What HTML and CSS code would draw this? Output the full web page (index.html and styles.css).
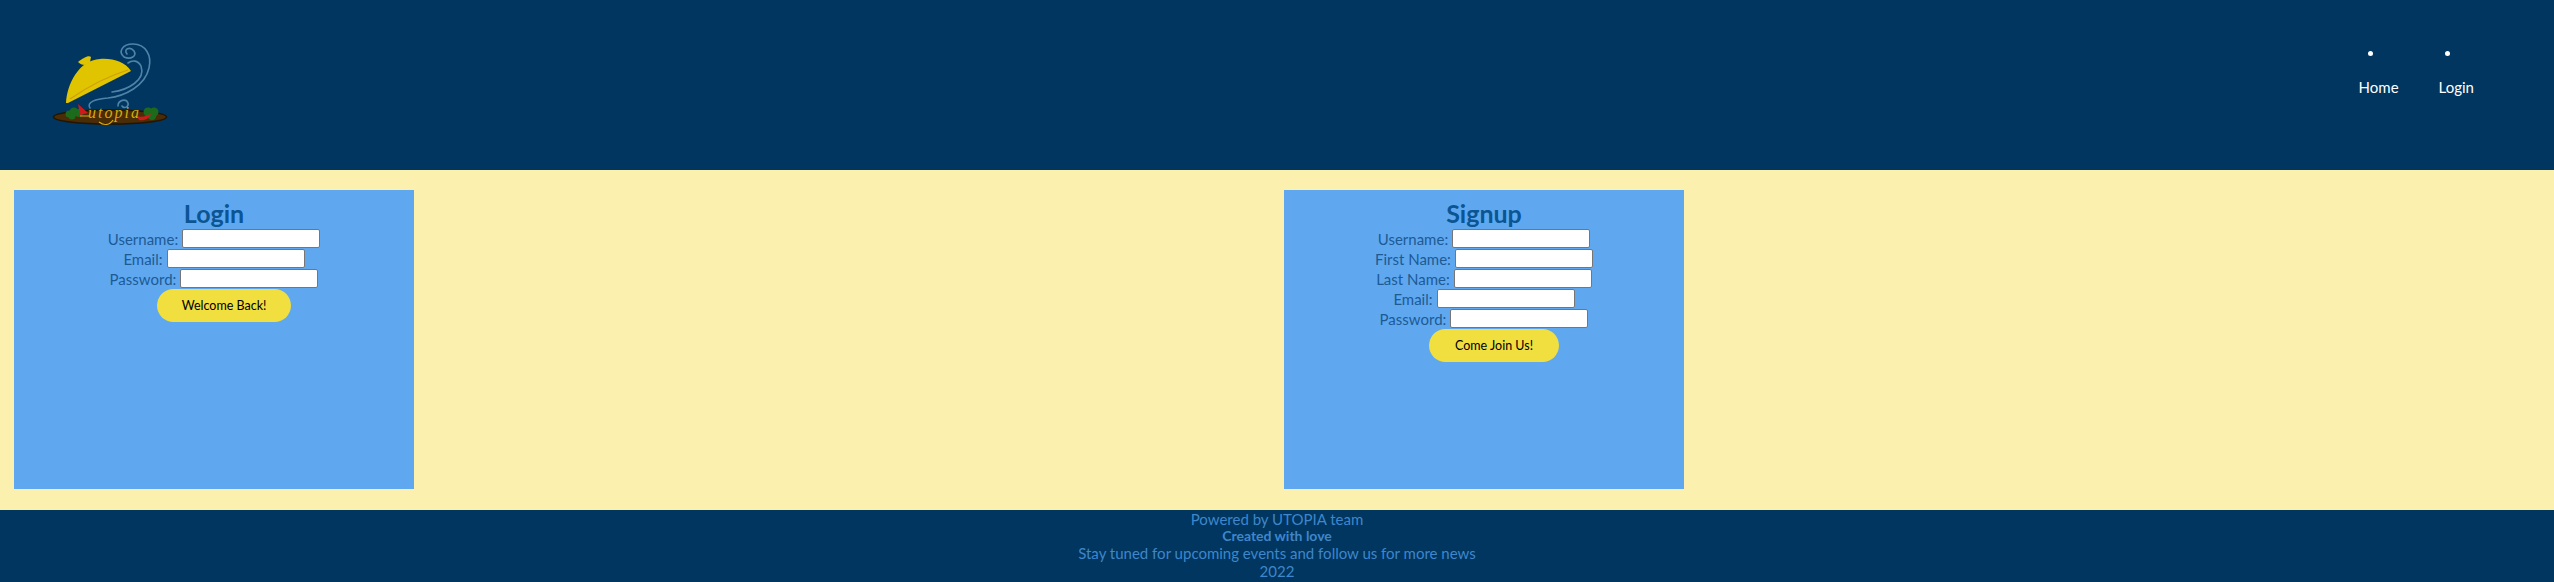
FILE: index.html
```html
<!DOCTYPE html>
<html lang="en">
<head>
  <meta charset="UTF-8" />
  <title>Utopia</title>
  <link rel="stylesheet" href="styles.css">
</head>
<body>
  <header class="site-header">
    <svg class="logo" width="140" height="105" viewBox="40 30 140 105" role="img" aria-label="Utopia logo">
      <!-- steam -->
      <g fill="none" stroke="#4f84a8" stroke-width="1.6" stroke-linecap="round">
        <path d="M112 92 C128 90 146 80 141 66 C138 60 132 60 128 63" />
        <path d="M127 54 C123 49 130 46 134 51 C137 56 131 60 124 57 C118 52 122 44 133 44 C146 44 152 56 149 68 C145 86 125 96 108 98 C96 99 86 102 90 108" />
        <path d="M118 106 C118 100 126 98 128 103 C129 107 124 109 122 106" />
      </g>
      <!-- plate -->
      <ellipse cx="110" cy="117" rx="56.5" ry="7" fill="#4a2c06" stroke="#241500" stroke-width="1.5" />
      <!-- lid -->
      <path d="M78 62 C80 60 82 59 84 58 C87 56 90 56 91 57 L90 62 L85 65 C82 65 80 64 78 62 Z" fill="#e0c400" />
      <path d="M66 103 C67 84 79 60 100 59 C113 58 125 62 131 71 L68 103 Z" fill="#e0c400" />
      <path d="M70 99 C86 88 108 76 128 70" fill="none" stroke="#cf9f08" stroke-width="1.2" />
      <!-- vegetables -->
      <g fill="#1c6b1c">
        <circle cx="69" cy="114" r="3.5" />
        <circle cx="74" cy="112" r="4.5" />
        <circle cx="79" cy="113" r="4" />
        <circle cx="72" cy="116" r="3.5" />
        <circle cx="148" cy="112" r="4.5" />
        <circle cx="154" cy="112" r="4.5" />
        <circle cx="152" cy="116" r="4" />
      </g>
      <path d="M78 104 L88 113 L80 115 Z" fill="#cc1b1b" />
      <path d="M137 116 C141 118 148 116 151 113 C150 119 144 121 139 120 Z" fill="#cc1b1b" />
      <text class="logo-text" x="88" y="118">utopia</text>
      <path d="M80 116 L90 116 M99 122 C104 126 110 125 113 120" fill="none" stroke="#d9a90f" stroke-width="1.2" />
    </svg>
    <ul class="nav">
      <li><a href="#">Home</a></li>
      <li><a href="#">Login</a></li>
    </ul>
  </header>

  <main class="forms">
    <section class="card">
      <h2>Login</h2>
      <form>
        <div class="row"><label>Username:</label> <input type="text" /></div>
        <div class="row"><label>Email:</label> <input type="text" /></div>
        <div class="row"><label>Password:</label> <input type="password" /></div>
        <button type="button" class="btn btn-login">Welcome Back!</button>
      </form>
    </section>
    <section class="card">
      <h2>Signup</h2>
      <form>
        <div class="row"><label>Username:</label> <input type="text" /></div>
        <div class="row"><label>First Name:</label> <input type="text" /></div>
        <div class="row"><label>Last Name:</label> <input type="text" /></div>
        <div class="row"><label>Email:</label> <input type="text" /></div>
        <div class="row"><label>Password:</label> <input type="password" /></div>
        <button type="button" class="btn btn-signup">Come Join Us!</button>
      </form>
    </section>
  </main>

  <footer class="site-footer">
    <p class="line-big">Powered by UTOPIA team</p>
    <p class="line-small">Created with love</p>
    <p class="line-big">Stay tuned for upcoming events and follow us for more news</p>
    <p class="line-big">2022</p>
  </footer>
</body>
</html>
```

FILE: styles.css
```css
body {
  font-family: Lato, "Open Sans", sans-serif;
  margin: 0;
  background: #003660;
}
.site-header {
  background: #003660;
  height: 170px;
  display: flex;
  justify-content: space-between;
  padding: 30px 80px 0 40px;
  box-sizing: border-box;
}
.logo {
  display: block;
}
.logo-text {
  font-family: "Liberation Serif", serif;
  font-style: italic;
  font-size: 16px;
  letter-spacing: 2px;
  fill: #d9a90f;
}
.nav {
  list-style: disc inside;
  display: flex;
  gap: 40px;
  margin: 12px 0 0;
  padding: 0;
  color: white;
  text-align: center;
}
.nav a {
  display: block;
  margin-top: 16px;
  color: white;
  text-decoration: none;
  font-size: 15px;
  line-height: 20px;
}
.forms {
  background: #fcf0ae;
  height: 340px;
  box-sizing: border-box;
  padding: 20px 0 21px 14px;
  display: grid;
  grid-template-columns: 1270px 1270px;
}
.card {
  width: 400px;
  height: 299px;
  box-sizing: border-box;
  background: #5fa8f0;
  text-align: center;
  padding-top: 8px;
}
.card h2 {
  margin: 0;
  font-size: 25px;
  line-height: 31px;
  color: #0b5593;
}
.row {
  height: 20px;
  line-height: 20px;
}
label {
  font-size: 15px;
  color: #1d5a94;
}
input {
  width: 138px;
  height: 19px;
  box-sizing: border-box;
  padding: 1px 2px;
  border: 1px solid #767676;
  border-radius: 2px;
  background: white;
  vertical-align: top;
}
.btn {
  display: inline-block;
  height: 33px;
  border: none;
  border-radius: 17px;
  background: #f0df3f;
  color: black;
  font-family: inherit;
  font-size: 12.5px;
  padding: 0;
  vertical-align: top;
}
.btn-login {
  width: 134px;
  margin-left: 20px;
}
.btn-signup {
  width: 130px;
  margin-left: 20px;
}
.site-footer {
  background: #003660;
  height: 72px;
  text-align: center;
  color: #3f86cb;
  overflow: hidden;
}
.site-footer p {
  margin: 0;
}
.line-big {
  font-size: 15px;
  line-height: 18px;
}
.line-small {
  font-size: 14px;
  line-height: 16px;
  font-weight: bold;
}
```
